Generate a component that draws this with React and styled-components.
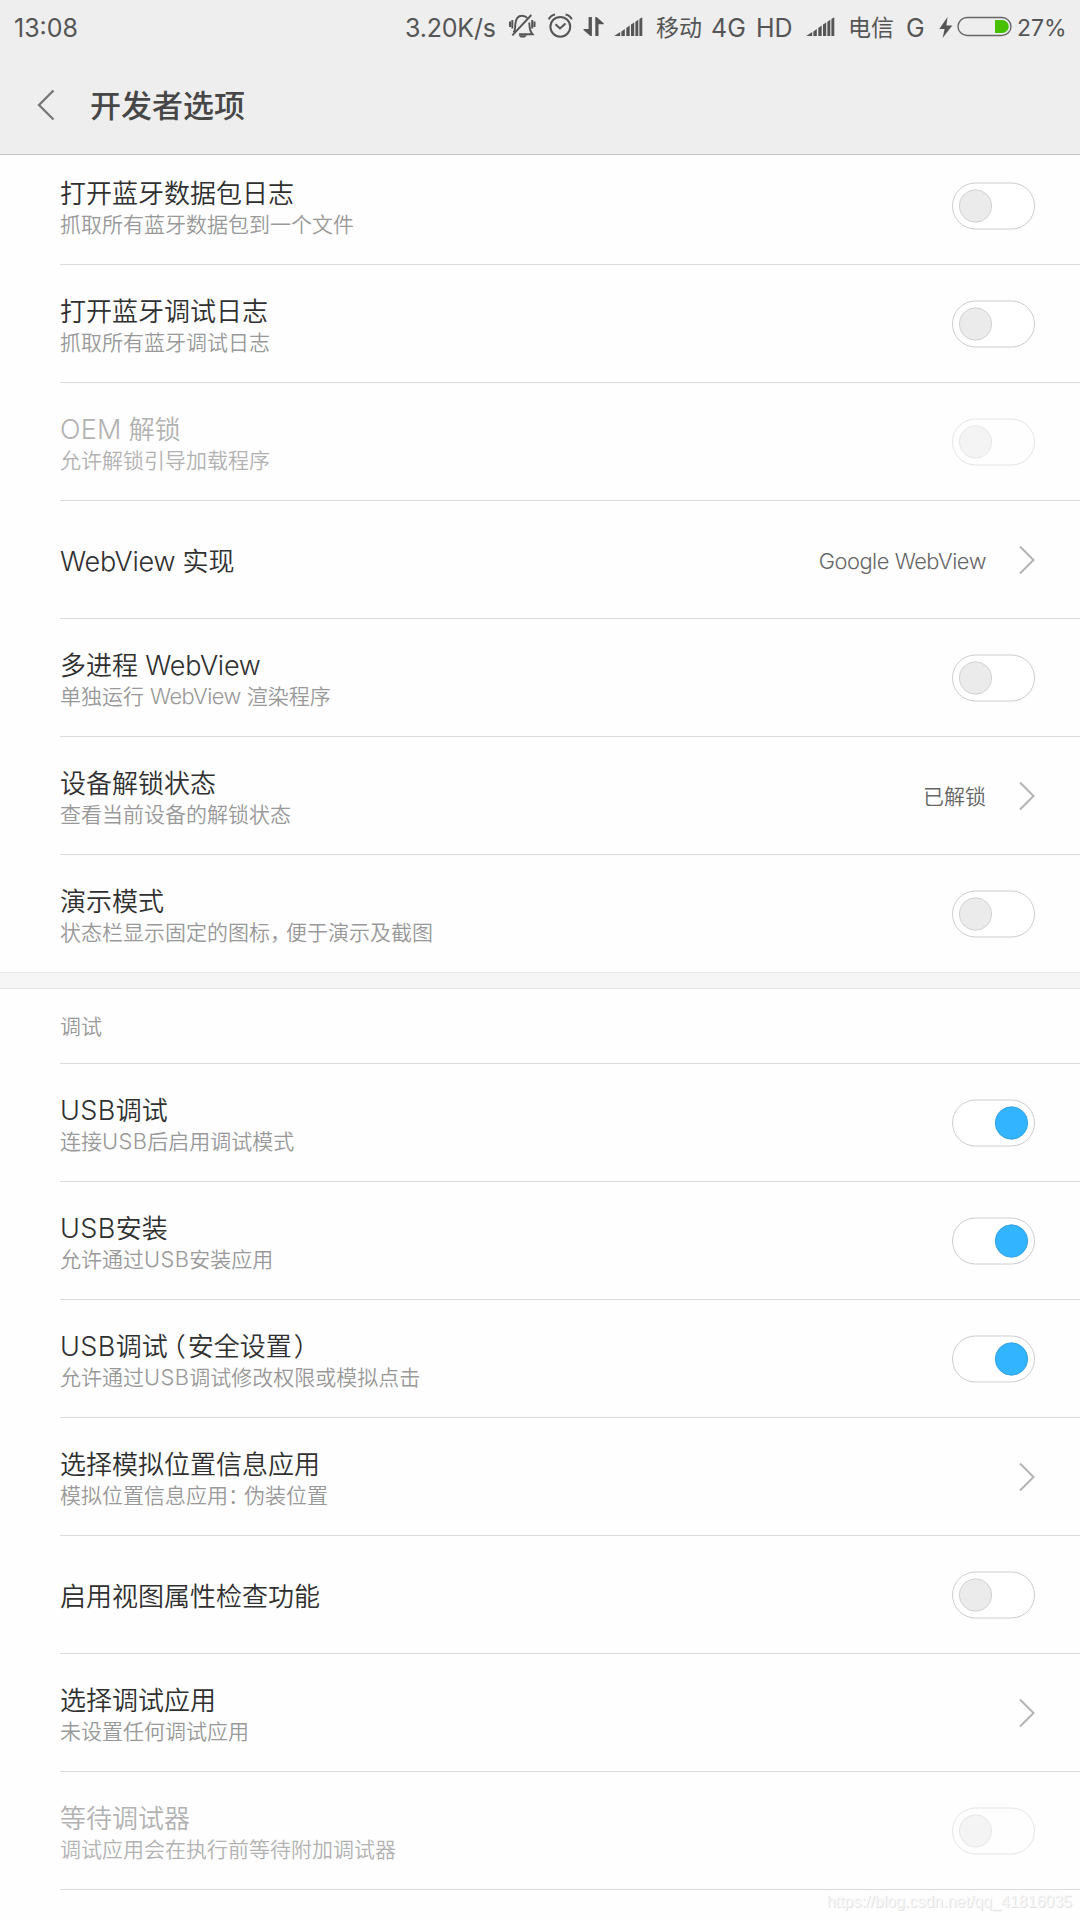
import React from "react";
import styled, { createGlobalStyle } from "styled-components";

const GlobalStyle = createGlobalStyle`
  * {
    box-sizing: border-box;
  }
  body {
    margin: 0;
    background: #fefefe;
    font-family: Inter, "Noto Sans CJK SC", sans-serif;
  }
`;

const Screen = styled.div`
  position: relative;
  width: 1080px;
  height: 1920px;
  display: flex;
  flex-direction: column;
  overflow: hidden;
  background: #fefefe;
`;

const Header = styled.header`
  flex: none;
  height: 155px;
  background: #eeeeee;
  border-bottom: 1px solid #c6c6c6;
`;

const StatusBar = styled.div`
  height: 56px;
  padding-left: 14px;
  display: grid;
  grid-template-columns:
    391px 102px 40px 36px 30px 43px 55px 45px 49px 43px 58px 32px
    18px 61px 62px;
  align-items: center;
  color: #555555;
`;

const StatusText = styled.span`
  font-size: ${(props) => props.$size || 25}px;
  letter-spacing: ${(props) => props.$spacing || 0}px;
  line-height: 56px;
  white-space: nowrap;
`;

const StatusIcon = styled.svg`
  display: block;
  width: ${(props) => props.$w}px;
  height: 56px;
`;

const TitleBar = styled.div`
  height: 98px;
  padding: 0 37px;
  display: flex;
  align-items: center;
  gap: 35px;
`;

const BackIcon = styled.svg`
  width: 18px;
  height: 32px;
  margin-bottom: 1px;
`;

const PageTitle = styled.h1`
  margin: 0;
  padding-top: 2px;
  font-size: 31px;
  font-weight: 500;
  line-height: 98px;
  color: #474747;
`;

const List = styled.main`
  flex: 1;
  overflow: hidden;
`;

const Group = styled.section`
  margin-top: ${(props) => (props.$scrolled ? "-8px" : "0")};
`;

const Row = styled.div`
  height: ${(props) => (props.$last ? 117 : 118)}px;
  margin-left: 60px;
  padding: 0 45px 0 0;
  display: flex;
  align-items: center;
  border-bottom: ${(props) => (props.$last ? "0" : "1px solid #dadada")};
`;

const Texts = styled.div`
  flex: 1;
  padding-top: ${(props) => (props.$double ? 6 : 4)}px;
`;

const Title = styled.div`
  font-size: 26px;
  font-weight: 350;
  line-height: 31px;
  color: ${(props) => (props.$disabled ? "#b2b2b2" : "#303030")};
`;

const Summary = styled.div`
  font-size: 21px;
  font-weight: 350;
  line-height: 31px;
  color: ${(props) => (props.$disabled ? "#b2b2b2" : "#999999")};
`;

const Value = styled.span`
  margin-right: 33px;
  padding-top: ${(props) => (props.$cjk ? 1 : 3)}px;
  font-size: 21px;
  font-weight: 350;
  line-height: 25px;
  color: #666666;
`;

const Latin = styled.span`
  font-size: 1.04em;
  font-weight: 350;
  letter-spacing: ${(props) => props.$spacing || 0}px;
`;

/* half-width punctuation with its own side bearings */
const Narrow = styled.span`
  font-feature-settings: "halt";
  margin-left: ${(props) => props.$left || 0}px;
  margin-right: ${(props) => props.$right || 0}px;
`;

const Divider = styled.div`
  height: 17px;
  background: #f6f6f6;
  border-top: 1px solid #e4e4e4;
  border-bottom: 1px solid #e4e4e4;
`;

const GroupTitle = styled.h2`
  height: 75px;
  margin: 0 0 0 60px;
  font-size: 21px;
  font-weight: 350;
  line-height: 75px;
  color: #999999;
  border-bottom: 1px solid #dadada;
`;

const SwitchIcon = styled.svg`
  display: block;
  width: 83px;
  height: 48px;
  margin-top: 1px;
  opacity: ${(props) => (props.$disabled ? 0.5 : 1)};
`;

const ArrowIcon = styled.svg`
  display: block;
  width: 16px;
  height: 30px;
  margin-top: 1px;
`;

const Watermark = styled.div`
  position: absolute;
  right: 8px;
  bottom: 9px;
  font-family: "Liberation Sans", sans-serif;
  font-size: 16px;
  line-height: 18px;
  color: #f8f8f8;
  text-shadow: 1px 1px 0 #e2e2e2;
`;

const Switch = ({ on, disabled }) => (
  <SwitchIcon viewBox="0 0 83 48" $disabled={disabled}>
    <rect x=".5" y="1" width="82" height="46" rx="23" fill="#fff" stroke="#cdcdcd" />
    <circle
      cx={on ? 59.5 : 23.5}
      cy="24"
      r="16.2"
      fill={on ? "#33b4ff" : "#ebebeb"}
      stroke={on ? "#38a3e6" : "#d2d2d2"}
    />
  </SwitchIcon>
);

const Arrow = () => (
  <ArrowIcon viewBox="0 0 16 30">
    <path d="M1 1.5L14.5 15L1 28.5" fill="none" stroke="#b3b3b3" strokeWidth="2" />
  </ArrowIcon>
);

const Mute = () => (
  <StatusIcon $w={29} viewBox="0 0 29 56">
    <g fill="none" stroke="#555" strokeWidth="1.9">
      <path d="M6.5 32.5C8.7 30 8 28 8.3 24.5C8.7 19 11 15.8 15 15.8C17.3 15.8 19 16.5 20.3 18" />
      <path d="M22.3 22.5C22.6 28 22.3 30.5 25.5 34.2H12" />
      <path d="M5.3 35.3L24.3 15" />
      <path d="M5.3 20V28.5M3 21.5V27M25.2 20V28.5M27.5 21.5V27" strokeWidth="2" />
    </g>
    <path d="M11.5 35.3H20L17.8 37.6H13.7Z" fill="#555" />
  </StatusIcon>
);

const Alarm = () => (
  <StatusIcon $w={26} viewBox="0 0 26 56">
    <g fill="none" stroke="#555" strokeWidth="2">
      <circle cx="13.3" cy="26.8" r="9.9" />
      <path d="M8.5 24.2L13 28.5L18.5 23.5" />
      <path d="M1.8 19.3C2.8 16.8 5 15 8 14.4M24.8 19.3C23.8 16.8 21.6 15 18.6 14.4" />
    </g>
  </StatusIcon>
);

const Traffic = () => (
  <StatusIcon $w={22} viewBox="0 0 22 56">
    <path
      d="M5.6 17H8.9V36H7.4L.5 30V29H5.6ZM12.3 17H13.6L20.7 23.2V24.2H15.5V36H12.3Z"
      fill="#555"
    />
  </StatusIcon>
);

const Signal = () => (
  <StatusIcon $w={31} viewBox="0 0 31 56">
    <path
      d="M1.2 36L7.2 32V36ZM8.4 31.5V36H11.8V29ZM13.3 28V36H16.7V25.5ZM18 24.6V36H21.2V22.4ZM22.4 21.7V36H25.3V19.8ZM26.4 19V36H29.3V17.3Z"
      fill="#555"
    />
  </StatusIcon>
);

const Bolt = () => (
  <StatusIcon $w={16} viewBox="0 0 16 56">
    <path d="M9.5 17L1.3 29H6.6L4.6 38L14.3 25.6H8.4Z" fill="#555" />
  </StatusIcon>
);

const Battery = () => (
  <StatusIcon $w={56} viewBox="0 0 56 56">
    <rect x="2" y="17.5" width="53" height="18" rx="9" fill="none" stroke="#666" strokeWidth="1.4" />
    <path d="M39 20H46.3A6.5 6.5 0 0 1 46.3 33H39Z" fill="#47c000" />
  </StatusIcon>
);

const generalItems = [
  { title: "打开蓝牙数据包日志", summary: "抓取所有蓝牙数据包到一个文件" },
  { title: "打开蓝牙调试日志", summary: "抓取所有蓝牙调试日志" },
  {
    title: (
      <>
        <Latin $spacing={0.2}>OEM</Latin> 解锁
      </>
    ),
    summary: "允许解锁引导加载程序",
    disabled: true,
  },
  {
    title: (
      <>
        <Latin $spacing={-0.25}>WebView</Latin> 实现
      </>
    ),
    value: <Latin $spacing={-0.45}>Google WebView</Latin>,
    arrow: true,
  },
  {
    title: (
      <>
        多进程 <Latin $spacing={-0.25}>WebView</Latin>
      </>
    ),
    summary: (
      <>
        单独运行 <Latin $spacing={-0.5}>WebView</Latin> 渲染程序
      </>
    ),
  },
  {
    title: "设备解锁状态",
    summary: "查看当前设备的解锁状态",
    value: "已解锁",
    cjk: true,
    arrow: true,
  },
  {
    title: "演示模式",
    summary: (
      <>
        状态栏显示固定的图标<Narrow $right={5.5}>，</Narrow>便于演示及截图
      </>
    ),
  },
];

const usb = <Latin $spacing={0.4}>USB</Latin>;

const debugItems = [
  { title: <>{usb}调试</>, summary: <>连接{usb}后启用调试模式</>, on: true },
  { title: <>{usb}安装</>, summary: <>允许通过{usb}安装应用</>, on: true },
  {
    title: (
      <>
        {usb}调试<Narrow $left={5} $right={2}>（</Narrow>安全设置
        <Narrow $left={2}>）</Narrow>
      </>
    ),
    summary: <>允许通过{usb}调试修改权限或模拟点击</>,
    on: true,
  },
  {
    title: "选择模拟位置信息应用",
    summary: (
      <>
        模拟位置信息应用<Narrow $right={5.5}>：</Narrow>伪装位置
      </>
    ),
    arrow: true,
  },
  { title: "启用视图属性检查功能" },
  { title: "选择调试应用", summary: "未设置任何调试应用", arrow: true },
  { title: "等待调试器", summary: "调试应用会在执行前等待附加调试器", disabled: true },
];

const Item = ({ title, summary, value, cjk, arrow, on, disabled, last }) => (
  <Row $last={last}>
    <Texts $double={!!summary}>
      <Title $disabled={disabled}>{title}</Title>
      {summary && <Summary $disabled={disabled}>{summary}</Summary>}
    </Texts>
    {value && <Value $cjk={cjk}>{value}</Value>}
    {arrow ? <Arrow /> : <Switch on={on} disabled={disabled} />}
  </Row>
);

export default () => {
  return (
    <Screen>
      <GlobalStyle />
      <Header>
        <StatusBar>
          <StatusText>13:08</StatusText>
          <StatusText $spacing={-0.2}>3.20K/s</StatusText>
          <Mute />
          <Alarm />
          <Traffic />
          <Signal />
          <StatusText $size={23}>移动</StatusText>
          <StatusText>4G</StatusText>
          <StatusText>HD</StatusText>
          <Signal />
          <StatusText $size={23}>电信</StatusText>
          <StatusText>G</StatusText>
          <Bolt />
          <Battery />
          <StatusText $size={23}>27%</StatusText>
        </StatusBar>
        <TitleBar>
          <BackIcon viewBox="0 0 18 32">
            <path d="M16.5 1.5L2 16L16.5 30.5" fill="none" stroke="#777" strokeWidth="2.3" />
          </BackIcon>
          <PageTitle>开发者选项</PageTitle>
        </TitleBar>
      </Header>

      <List>
        <Group $scrolled>
          {generalItems.map((item, i) => (
            <Item key={i} {...item} last={i === generalItems.length - 1} />
          ))}
        </Group>
        <Divider />
        <Group>
          <GroupTitle>调试</GroupTitle>
          {debugItems.map((item, i) => (
            <Item key={i} {...item} />
          ))}
        </Group>
      </List>

      <Watermark>https://blog.csdn.net/qq_41816035</Watermark>
    </Screen>
  );
};
